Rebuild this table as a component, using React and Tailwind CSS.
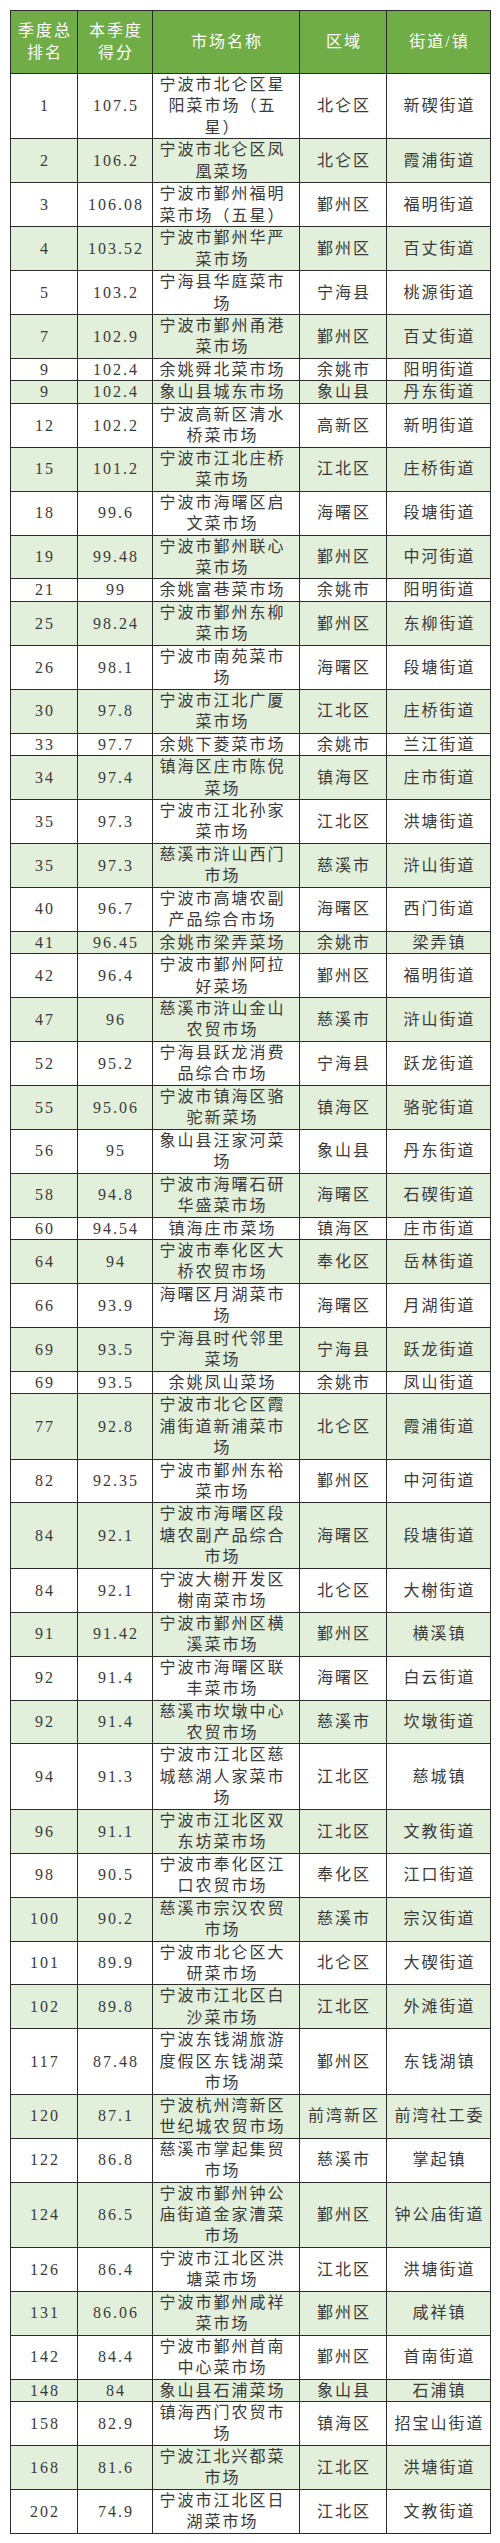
import React from "react";

const rows = [
  ["1", "107.5", "宁波市北仑区星阳菜市场（五星）", "北仑区", "新碶街道"],
  ["2", "106.2", "宁波市北仑区凤凰菜场", "北仑区", "霞浦街道"],
  ["3", "106.08", "宁波市鄞州福明菜市场（五星）", "鄞州区", "福明街道"],
  ["4", "103.52", "宁波市鄞州华严菜市场", "鄞州区", "百丈街道"],
  ["5", "103.2", "宁海县华庭菜市场", "宁海县", "桃源街道"],
  ["7", "102.9", "宁波市鄞州甬港菜市场", "鄞州区", "百丈街道"],
  ["9", "102.4", "余姚舜北菜市场", "余姚市", "阳明街道"],
  ["9", "102.4", "象山县城东市场", "象山县", "丹东街道"],
  ["12", "102.2", "宁波高新区清水桥菜市场", "高新区", "新明街道"],
  ["15", "101.2", "宁波市江北庄桥菜市场", "江北区", "庄桥街道"],
  ["18", "99.6", "宁波市海曙区启文菜市场", "海曙区", "段塘街道"],
  ["19", "99.48", "宁波市鄞州联心菜市场", "鄞州区", "中河街道"],
  ["21", "99", "余姚富巷菜市场", "余姚市", "阳明街道"],
  ["25", "98.24", "宁波市鄞州东柳菜市场", "鄞州区", "东柳街道"],
  ["26", "98.1", "宁波市南苑菜市场", "海曙区", "段塘街道"],
  ["30", "97.8", "宁波市江北广厦菜市场", "江北区", "庄桥街道"],
  ["33", "97.7", "余姚下菱菜市场", "余姚市", "兰江街道"],
  ["34", "97.4", "镇海区庄市陈倪菜场", "镇海区", "庄市街道"],
  ["35", "97.3", "宁波市江北孙家菜市场", "江北区", "洪塘街道"],
  ["35", "97.3", "慈溪市浒山西门市场", "慈溪市", "浒山街道"],
  ["40", "96.7", "宁波市高塘农副产品综合市场", "海曙区", "西门街道"],
  ["41", "96.45", "余姚市梁弄菜场", "余姚市", "梁弄镇"],
  ["42", "96.4", "宁波市鄞州阿拉好菜场", "鄞州区", "福明街道"],
  ["47", "96", "慈溪市浒山金山农贸市场", "慈溪市", "浒山街道"],
  ["52", "95.2", "宁海县跃龙消费品综合市场", "宁海县", "跃龙街道"],
  ["55", "95.06", "宁波市镇海区骆驼新菜场", "镇海区", "骆驼街道"],
  ["56", "95", "象山县汪家河菜场", "象山县", "丹东街道"],
  ["58", "94.8", "宁波市海曙石研华盛菜市场", "海曙区", "石碶街道"],
  ["60", "94.54", "镇海庄市菜场", "镇海区", "庄市街道"],
  ["64", "94", "宁波市奉化区大桥农贸市场", "奉化区", "岳林街道"],
  ["66", "93.9", "海曙区月湖菜市场", "海曙区", "月湖街道"],
  ["69", "93.5", "宁海县时代邻里菜场", "宁海县", "跃龙街道"],
  ["69", "93.5", "余姚凤山菜场", "余姚市", "凤山街道"],
  ["77", "92.8", "宁波市北仑区霞浦街道新浦菜市场", "北仑区", "霞浦街道"],
  ["82", "92.35", "宁波市鄞州东裕菜市场", "鄞州区", "中河街道"],
  ["84", "92.1", "宁波市海曙区段塘农副产品综合市场", "海曙区", "段塘街道"],
  ["84", "92.1", "宁波大榭开发区榭南菜市场", "北仑区", "大榭街道"],
  ["91", "91.42", "宁波市鄞州区横溪菜市场", "鄞州区", "横溪镇"],
  ["92", "91.4", "宁波市海曙区联丰菜市场", "海曙区", "白云街道"],
  ["92", "91.4", "慈溪市坎墩中心农贸市场", "慈溪市", "坎墩街道"],
  ["94", "91.3", "宁波市江北区慈城慈湖人家菜市场", "江北区", "慈城镇"],
  ["96", "91.1", "宁波市江北区双东坊菜市场", "江北区", "文教街道"],
  ["98", "90.5", "宁波市奉化区江口农贸市场", "奉化区", "江口街道"],
  ["100", "90.2", "慈溪市宗汉农贸市场", "慈溪市", "宗汉街道"],
  ["101", "89.9", "宁波市北仑区大研菜市场", "北仑区", "大碶街道"],
  ["102", "89.8", "宁波市江北区白沙菜市场", "江北区", "外滩街道"],
  ["117", "87.48", "宁波东钱湖旅游度假区东钱湖菜市场", "鄞州区", "东钱湖镇"],
  ["120", "87.1", "宁波杭州湾新区世纪城农贸市场", "前湾新区", "前湾社工委"],
  ["122", "86.8", "慈溪市掌起集贸市场", "慈溪市", "掌起镇"],
  ["124", "86.5", "宁波市鄞州钟公庙街道金家漕菜市场", "鄞州区", "钟公庙街道"],
  ["126", "86.4", "宁波市江北区洪塘菜市场", "江北区", "洪塘街道"],
  ["131", "86.06", "宁波市鄞州咸祥菜市场", "鄞州区", "咸祥镇"],
  ["142", "84.4", "宁波市鄞州首南中心菜市场", "鄞州区", "首南街道"],
  ["148", "84", "象山县石浦菜场", "象山县", "石浦镇"],
  ["158", "82.9", "镇海西门农贸市场", "镇海区", "招宝山街道"],
  ["168", "81.6", "宁波江北兴都菜市场", "江北区", "洪塘街道"],
  ["202", "74.9", "宁波市江北区日湖菜市场", "江北区", "文教街道"],
];

const th =
  "border border-[#2a2a2a] bg-[#70ad47] text-white font-normal text-center align-middle py-[9px] px-0 leading-[22px] pl-[2px]";
const td =
  "border border-[#2a2a2a] text-center align-middle py-0 leading-[21.45px] pl-[2px]";

export default function App() {
  return (
    <div
      className="bg-white p-[10px] text-[16px] tracking-[2px] text-[#3a3a3a]"
      style={{ fontFamily: '"Liberation Serif", "Noto Sans CJK SC", serif' }}
    >
      <table className="w-[480px] table-fixed border-collapse">
        <colgroup>
          <col className="w-[67px]" />
          <col className="w-[75px]" />
          <col className="w-[147px]" />
          <col className="w-[87px]" />
          <col className="w-[104px]" />
        </colgroup>
        <thead>
          <tr>
            <th className={th}>
              季度总
              <br />
              排名
            </th>
            <th className={th}>
              本季度
              <br />
              得分
            </th>
            <th className={th}>市场名称</th>
            <th className={th}>区域</th>
            <th className={th}>街道/镇</th>
          </tr>
        </thead>
        <tbody>
          {rows.map((r, i) => (
            <tr key={i} className={i % 2 === 1 ? "bg-[#e2efda]" : "bg-white"}>
              <td className={td}>{r[0]}</td>
              <td className={td}>{r[1]}</td>
              <td className={td + " px-[9px]"}>{r[2]}</td>
              <td className={td}>{r[3]}</td>
              <td className={td}>{r[4]}</td>
            </tr>
          ))}
        </tbody>
      </table>
    </div>
  );
}
